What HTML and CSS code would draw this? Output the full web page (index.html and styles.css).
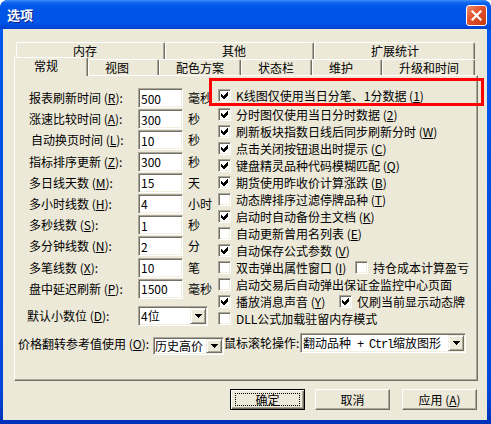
FILE: index.html
```html
<!DOCTYPE html>
<html lang="zh-CN">
<head>
    <meta charset="UTF-8">
    <meta name="viewport" content="width=device-width, initial-scale=1.0">
    <title>选项</title>
    <link rel="stylesheet" href="styles.css">
</head>
<body>
<div class="window">

    <!-- title bar -->
    <div class="titlebar">
        <span class="title">选项</span>
        <span class="close-btn">
            <svg width="11" height="11" viewBox="0 0 11 11"><path d="M1.5 1.5 L9.5 9.5 M9.5 1.5 L1.5 9.5" stroke="#fff" stroke-width="2.2" stroke-linecap="square"/></svg>
        </span>
    </div>

    <div class="client">
        <!-- tabs, two rows -->
        <div class="tabrow tabrow-back">
            <div class="tab tab-memory">内存</div>
            <div class="tab tab-other">其他</div>
            <div class="tab tab-stats">扩展统计</div>
        </div>
        <div class="tabrow tabrow-front">
            <div class="tab tab-general">常规</div>
            <div class="tab tab-view">视图</div>
            <div class="tab tab-color">配色方案</div>
            <div class="tab tab-status">状态栏</div>
            <div class="tab tab-maint">维护</div>
            <div class="tab tab-upgrade">升级和时间</div>
        </div>

        <div class="panel">
            <div class="panel-main">
                <!-- left: numeric fields -->
                <div class="fields">
                    <div class="field"><span class="field-label">报表刷新时间 (<u>R</u>):</span><input class="edit" type="text" value="500"><span class="unit">毫秒</span></div>
                    <div class="field"><span class="field-label">涨速比较时间 (<u>A</u>):</span><input class="edit" type="text" value="300"><span class="unit">秒</span></div>
                    <div class="field"><span class="field-label indent">自动换页时间 (<u>L</u>):</span><input class="edit" type="text" value="10"><span class="unit">秒</span></div>
                    <div class="field"><span class="field-label">指标排序更新 (<u>Z</u>):</span><input class="edit" type="text" value="300"><span class="unit">秒</span></div>
                    <div class="field"><span class="field-label">多日线天数 (<u>M</u>):</span><input class="edit" type="text" value="15"><span class="unit">天</span></div>
                    <div class="field"><span class="field-label">多小时线数 (<u>H</u>):</span><input class="edit" type="text" value="4"><span class="unit">小时</span></div>
                    <div class="field"><span class="field-label">多秒线数 (<u>S</u>):</span><input class="edit" type="text" value="1"><span class="unit">秒</span></div>
                    <div class="field"><span class="field-label">多分钟线数 (<u>N</u>):</span><input class="edit" type="text" value="2"><span class="unit">分</span></div>
                    <div class="field"><span class="field-label">多笔线数 (<u>X</u>):</span><input class="edit" type="text" value="10"><span class="unit">笔</span></div>
                    <div class="field"><span class="field-label">盘中延迟刷新 (<u>P</u>):</span><input class="edit" type="text" value="1500"><span class="unit">毫秒</span></div>
                    <div class="field field-decimal">
                        <span class="field-label outdent">默认小数位 (<u>D</u>):</span>
                        <div class="combo combo-decimal">
                            <span class="combo-text">4位</span>
                            <span class="combo-btn"><svg width="7" height="4" viewBox="0 0 7 4"><path d="M0 0H7V1H6V2H5V3H4V4H3V3H2V2H1V1H0Z"/></svg></span>
                        </div>
                    </div>
                </div>

                <!-- right: check boxes -->
                <div class="checks">
                    <div class="check first"><span class="cb"><svg width="7" height="7" viewBox="0 0 7 7"><path d="M0 2L2 4L6 0H7V3L3 7H2L0 5Z"/></svg></span>K线图仅使用当日分笔、1分数据 (<u>1</u>)</div>
                    <div class="check"><span class="cb"><svg width="7" height="7" viewBox="0 0 7 7"><path d="M0 2L2 4L6 0H7V3L3 7H2L0 5Z"/></svg></span>分时图仅使用当日分时数据 (<u>2</u>)</div>
                    <div class="check"><span class="cb"><svg width="7" height="7" viewBox="0 0 7 7"><path d="M0 2L2 4L6 0H7V3L3 7H2L0 5Z"/></svg></span>刷新板块指数日线后同步刷新分时 (<u>W</u>)</div>
                    <div class="check"><span class="cb"><svg width="7" height="7" viewBox="0 0 7 7"><path d="M0 2L2 4L6 0H7V3L3 7H2L0 5Z"/></svg></span>点击关闭按钮退出时提示 (<u>C</u>)</div>
                    <div class="check"><span class="cb"><svg width="7" height="7" viewBox="0 0 7 7"><path d="M0 2L2 4L6 0H7V3L3 7H2L0 5Z"/></svg></span>键盘精灵品种代码模糊匹配 (<u>Q</u>)</div>
                    <div class="check"><span class="cb"><svg width="7" height="7" viewBox="0 0 7 7"><path d="M0 2L2 4L6 0H7V3L3 7H2L0 5Z"/></svg></span>期货使用昨收价计算涨跌 (<u>B</u>)</div>
                    <div class="check"><span class="cb"></span>动态牌排序过滤停牌品种 (<u>T</u>)</div>
                    <div class="check"><span class="cb"><svg width="7" height="7" viewBox="0 0 7 7"><path d="M0 2L2 4L6 0H7V3L3 7H2L0 5Z"/></svg></span>启动时自动备份主文档 (<u>K</u>)</div>
                    <div class="check"><span class="cb"></span>自动更新曾用名列表 (<u>E</u>)</div>
                    <div class="check"><span class="cb"><svg width="7" height="7" viewBox="0 0 7 7"><path d="M0 2L2 4L6 0H7V3L3 7H2L0 5Z"/></svg></span>自动保存公式参数 (<u>V</u>)</div>
                    <div class="check"><span class="cb"></span><span class="pair-label pair-wide">双击弹出属性窗口 (<u>I</u>)</span><span class="cb"></span>持仓成本计算盈亏</div>
                    <div class="check"><span class="cb"></span>启动交易后自动弹出保证金监控中心页面</div>
                    <div class="check"><span class="cb"><svg width="7" height="7" viewBox="0 0 7 7"><path d="M0 2L2 4L6 0H7V3L3 7H2L0 5Z"/></svg></span><span class="pair-label pair-narrow">播放消息声音 (<u>Y</u>)</span><span class="cb"><svg width="7" height="7" viewBox="0 0 7 7"><path d="M0 2L2 4L6 0H7V3L3 7H2L0 5Z"/></svg></span>仅刷当前显示动态牌</div>
                    <div class="check"><span class="cb"></span>DLL公式加载驻留内存模式</div>
                </div>
            </div>

            <!-- bottom row -->
            <div class="bottom-row">
                <span class="price-label">价格翻转参考值使用 (<u>O</u>):</span>
                <div class="combo combo-price">
                    <span class="combo-text">历史高价</span>
                    <span class="combo-btn"><svg width="7" height="4" viewBox="0 0 7 4"><path d="M0 0H7V1H6V2H5V3H4V4H3V3H2V2H1V1H0Z"/></svg></span>
                </div>
                <span class="wheel-label">鼠标滚轮操作:</span>
                <div class="combo combo-wheel">
                    <span class="combo-text">翻动品种<span class="mono"> + Ctrl</span>缩放图形</span>
                    <span class="combo-btn"><svg width="7" height="4" viewBox="0 0 7 4"><path d="M0 0H7V1H6V2H5V3H4V4H3V3H2V2H1V1H0Z"/></svg></span>
                </div>
            </div>
        </div>

        <!-- dialog buttons -->
        <div class="buttons">
            <div class="btn btn-default"><span class="focus">确定</span></div>
            <div class="btn btn-cancel">取消</div>
            <div class="btn btn-apply">应用 (<u>A</u>)</div>
        </div>
    </div>

    <!-- red marker round the first option -->
    <div class="highlight"></div>
</div>
</body>
</html>
```

FILE: styles.css
```css
/* Base */
* {
    box-sizing: border-box;
}

body {
    margin: 0;
    font-family: "Noto Sans CJK SC", "Liberation Sans", sans-serif;
    font-size: 12px;
    color: #000;
    background: #fff;
}

u {
    text-decoration: underline;
    text-underline-offset: 1px;
}

/* Window frame */
.window {
    position: relative;
    width: 491px;
    height: 424px;
    display: flex;
    flex-direction: column;
    background: linear-gradient(#0058ee, #0048dc 92%, #0030b8);
    border-radius: 8px 8px 0 0;
    overflow: hidden;
}

.titlebar {
    flex: none;
    height: 29px;
    display: flex;
    justify-content: space-between;
    padding: 0 4px 0 7px;
    background: linear-gradient(#3d8ff8 0, #0a62ee 3px, #0056ea 7px, #0054e6 15px, #0056eb 22px, #0047d8 27px, #003fcc 29px);
}

.title {
    line-height: 29px;
    color: #fff;
    font-size: 13px;
    font-weight: bold;
    text-shadow: 1px 1px #0a1e80;
}

.close-btn {
    margin-top: 5px;
    width: 21px;
    height: 21px;
    display: flex;
    align-items: center;
    justify-content: center;
    border: 1px solid #fff;
    border-radius: 3px;
    background: linear-gradient(135deg, #ec8d6c 0, #e2552f 40%, #c6370f 100%);
}

.client {
    flex: 1;
    margin: 0 4px 4px 3px;
    padding-top: 13px;
    background: #ece9d8;
}

/* Tabs */
.tabrow {
    display: flex;
    margin-left: 13px;
}

.tabrow-back {
    height: 17px;
}

.tabrow-front {
    height: 16px;
}

.tab {
    height: 100%;
    background: #ece9d8;
    border-top: 1px solid #fff;
    border-left: 1px solid #fff;
    border-right: 1px solid #716f64;
    box-shadow: inset -1px 0 #aca899;
    border-radius: 2px 2px 0 0;
    line-height: 15px;
    white-space: nowrap;
}

.tabrow-back .tab { padding-left: 56px; }
.tabrow-front .tab { padding-left: 16px; }

.tab-memory { width: 149px; }
.tab-other { width: 149px; }
.tab-stats { width: 161px; }

.tabrow-front .tab-general {
    position: relative;
    z-index: 1;
    width: 74px;
    height: 19px;
    margin: -2px 0 0 -2px;
    padding-left: 19px;
}

.tab-view { width: 71px; }
.tab-color { width: 82px; }
.tab-status { width: 71px; }
.tab-maint { width: 70px; }
.tab-upgrade { width: 93px; }

/* Tab page */
.panel {
    margin-left: 11px;
    width: 464px;
    height: 306px;
    padding-top: 11px;
    border: 1px solid #fff;
    border-right-color: #716f64;
    border-bottom-color: #716f64;
    box-shadow: inset -1px -1px #aca899;
}

.panel-main {
    display: flex;
    padding-left: 14px;
}

.fields {
    width: 189px;
    padding-top: 1px;
}

.field {
    display: flex;
    align-items: flex-start;
    height: 21.2px;
}

.field-label {
    width: 109px;
    line-height: 20px;
    white-space: nowrap;
}

.field-label.indent { padding-left: 2px; }
.field-label.outdent { margin-left: -2px; width: 111px; }

.edit {
    width: 45px;
    height: 20px;
    margin: 0;
    padding: 0 2px;
    font: inherit;
    line-height: 16px;
    color: #000;
    background: #fff;
    border: 1px solid;
    border-color: #aca899 #fff #fff #aca899;
    box-shadow: inset 1px 1px #716f64, inset -1px -1px #f1efe2;
    outline: none;
}

.unit {
    margin-left: 5px;
    line-height: 20px;
    white-space: nowrap;
}

.field-decimal {
    margin-top: 6px;
    height: 20px;
}

/* Combo boxes */
.combo {
    display: flex;
    height: 20px;
    padding: 1px;
    background: #fff;
    border: 1px solid;
    border-color: #aca899 #fff #fff #aca899;
    box-shadow: inset 1px 1px #716f64, inset -1px -1px #f1efe2;
}

.combo-text {
    flex: 1;
    min-width: 0;
    padding-left: 1px;
    line-height: 16px;
    white-space: nowrap;
}

.combo-btn {
    flex: none;
    width: 16px;
    display: flex;
    align-items: center;
    justify-content: center;
    background: #ece9d8;
    border: 1px solid;
    border-color: #f1efe2 #716f64 #716f64 #f1efe2;
    box-shadow: inset 1px 1px #fff, inset -1px -1px #aca899;
}

.combo-btn svg {
    display: block;
    shape-rendering: crispEdges;
}

.combo-decimal {
    width: 70px;
}

/* Check boxes */
.checks {
    flex: 1;
}

.check {
    display: flex;
    align-items: center;
    height: 17px;
    white-space: nowrap;
}

.check.first {
    margin-bottom: 2px;
}

.cb {
    flex: none;
    width: 13px;
    height: 13px;
    margin-right: 5px;
    padding: 2px;
    background: #fff;
    border: 1px solid;
    border-color: #aca899 #fff #fff #aca899;
    box-shadow: inset 1px 1px #716f64, inset -1px -1px #f1efe2;
}

.cb svg {
    display: block;
    shape-rendering: crispEdges;
}

.pair-label { flex: none; }
.pair-wide { width: 119px; }
.pair-narrow { width: 103px; }

/* Bottom row */
.bottom-row {
    display: flex;
    align-items: flex-start;
    margin-top: 6px;
    padding-left: 3px;
    white-space: nowrap;
}

.price-label {
    width: 135px;
    line-height: 22px;
}

.combo-price {
    width: 71px;
    height: 18px;
    margin-top: 4px;
}

.combo-price .combo-text {
    padding-left: 0;
    line-height: 14px;
}

.wheel-label {
    width: 76px;
    line-height: 20px;
}

.combo-wheel {
    width: 166px;
}

.mono {
    font-family: "Liberation Mono", monospace;
    letter-spacing: -1.2px;
}

/* Buttons */
.buttons {
    display: flex;
    margin: 8px 0 0 227px;
}

.btn {
    width: 75px;
    height: 21px;
    display: flex;
    align-items: center;
    justify-content: center;
    background: #ece9d8;
    border: 1px solid;
    border-color: #fff #716f64 #716f64 #fff;
    box-shadow: inset -1px -1px #aca899;
    line-height: 17px;
}

.btn-default {
    border-color: #000;
    box-shadow: inset 1px 1px #fff, inset -1px -1px #716f64, inset -2px -2px #aca899;
}

.btn-default .focus {
    display: block;
    width: 65px;
    height: 13px;
    line-height: 11px;
    text-align: center;
    border: 1px dotted #000;
}

.btn-cancel { margin-left: 10px; }
.btn-apply { margin-left: 12px; }

/* red marker */
.highlight {
    position: absolute;
    left: 209px;
    top: 78px;
    width: 275px;
    height: 28px;
    border: 3px solid #f00;
}
```
